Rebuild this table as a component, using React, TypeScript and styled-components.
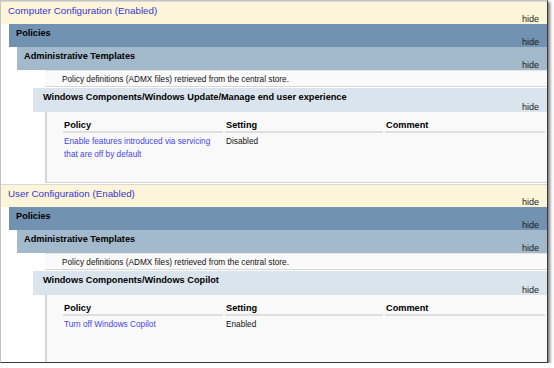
import React from 'react';
import styled, { createGlobalStyle, css } from 'styled-components';

const GlobalStyle = createGlobalStyle`
  body {
    margin: 0;
    background: #ffffff;
    font-family: 'Liberation Sans', Arial, sans-serif;
  }
`;

const Frame = styled.div`
  width: 546px;
  height: 361px;
  overflow: hidden;
  background: #ffffff;
  border: 1px solid;
  border-color: #c4c4c4 #3a3a3a #3a3a3a #c4c4c4;
  box-shadow: 2px 2px 3px rgba(0, 0, 0, 0.55);
`;

const Hide = styled.span`
  align-self: flex-end;
  font-size: 9px;
  line-height: 10px;
  color: #1a1a1a;
`;

const TopHeader = styled.div`
  display: flex;
  justify-content: space-between;
  height: 23px;
  box-sizing: border-box;
  padding: 0 8px 0 7px;
  background: #fdf5d9;
  border-top: 1px solid #d9d9d9;
`;

const TopTitle = styled.span`
  padding-top: 3px;
  font-size: 9.8px;
  line-height: 12px;
  color: #3636c9;
`;

interface NestProps {
  $indent: number;
}
const Nest = styled.div<NestProps>`
  margin-left: ${(p) => p.$indent}px;
`;

type Tone = 'dark' | 'mid' | 'light';
const tones: Record<Tone, string> = {
  dark: '#7193b1',
  mid: '#a3b9cc',
  light: '#dae4ec',
};

interface BandProps {
  $tone: Tone;
}
const Band = styled.div<BandProps>`
  display: flex;
  justify-content: space-between;
  height: 23px;
  padding: 0 8px 0 7px;
  background: ${(p) => tones[p.$tone]};
  ${(p) =>
    p.$tone === 'light' &&
    css`
      height: 24px;
      padding-left: 10px;
    `}
`;

const BandTitle = styled.span`
  padding-top: 4px;
  font-size: 9.2px;
  font-weight: bold;
  line-height: 11px;
  color: #000000;
`;

const InfoRow = styled.div`
  height: 17px;
  box-sizing: border-box;
  margin-bottom: 1px;
  padding: 3px 0 0 17px;
  background: #fafafa;
  border-top: 1px solid #e4e4e4;
  border-bottom: 1px solid #d6d6d6;
  font-size: 8.25px;
  line-height: 12px;
  color: #111111;
`;

const TableArea = styled.div`
  min-height: 64px;
  padding: 6px 0 0 14px;
  background: #f9f9f9;
  border-left: 2px solid #d6d6d6;
  border-bottom: 1px solid #d2d2d2;
  margin-bottom: 1px;
`;

const InfoTable = styled.table`
  table-layout: fixed;
  width: 486px;
  border-collapse: separate;
  border-spacing: 2px;
`;

const Th = styled.th`
  padding: 0 0 0 1px;
  text-align: left;
  font-size: 9.2px;
  font-weight: bold;
  line-height: 11px;
  color: #000000;
  border-bottom: 2px solid #dedede;
`;

const Td = styled.td`
  padding: 1px 6px 0 1px;
  vertical-align: top;
  font-size: 8.25px;
  line-height: 12.5px;
  color: #111111;
`;

const PolicyLink = styled.span`
  color: #4545e4;
`;

interface Setting {
  policy: string;
  value: string;
}

interface ScopeProps {
  title: string;
  category: string;
  settings: Setting[];
}

const Scope: React.FC<ScopeProps> = ({ title, category, settings }) => (
  <>
    <TopHeader>
      <TopTitle>{title}</TopTitle>
      <Hide>hide</Hide>
    </TopHeader>
    <Nest $indent={8}>
      <Band $tone="dark">
        <BandTitle>Policies</BandTitle>
        <Hide>hide</Hide>
      </Band>
      <Nest $indent={8}>
        <Band $tone="mid">
          <BandTitle>Administrative Templates</BandTitle>
          <Hide>hide</Hide>
        </Band>
        <Nest $indent={28}>
          <InfoRow>Policy definitions (ADMX files) retrieved from the central store.</InfoRow>
        </Nest>
        <Nest $indent={16}>
          <Band $tone="light">
            <BandTitle>{category}</BandTitle>
            <Hide>hide</Hide>
          </Band>
          <Nest $indent={12}>
            <TableArea>
              <InfoTable>
                <colgroup>
                  <col style={{ width: 160 }} />
                  <col style={{ width: 158 }} />
                  <col style={{ width: 160 }} />
                </colgroup>
                <thead>
                  <tr>
                    <Th>Policy</Th>
                    <Th>Setting</Th>
                    <Th>Comment</Th>
                  </tr>
                </thead>
                <tbody>
                  {settings.map((s) => (
                    <tr key={s.policy}>
                      <Td>
                        <PolicyLink>{s.policy}</PolicyLink>
                      </Td>
                      <Td>{s.value}</Td>
                      <Td />
                    </tr>
                  ))}
                </tbody>
              </InfoTable>
            </TableArea>
          </Nest>
        </Nest>
      </Nest>
    </Nest>
  </>
);

const App: React.FC = () => (
  <>
    <GlobalStyle />
    <Frame>
      <Scope
        title="Computer Configuration (Enabled)"
        category="Windows Components/Windows Update/Manage end user experience"
        settings={[
          {
            policy: 'Enable features introduced via servicing that are off by default',
            value: 'Disabled',
          },
        ]}
      />
      <Scope
        title="User Configuration (Enabled)"
        category="Windows Components/Windows Copilot"
        settings={[{ policy: 'Turn off Windows Copilot', value: 'Enabled' }]}
      />
    </Frame>
  </>
);

export default App;
